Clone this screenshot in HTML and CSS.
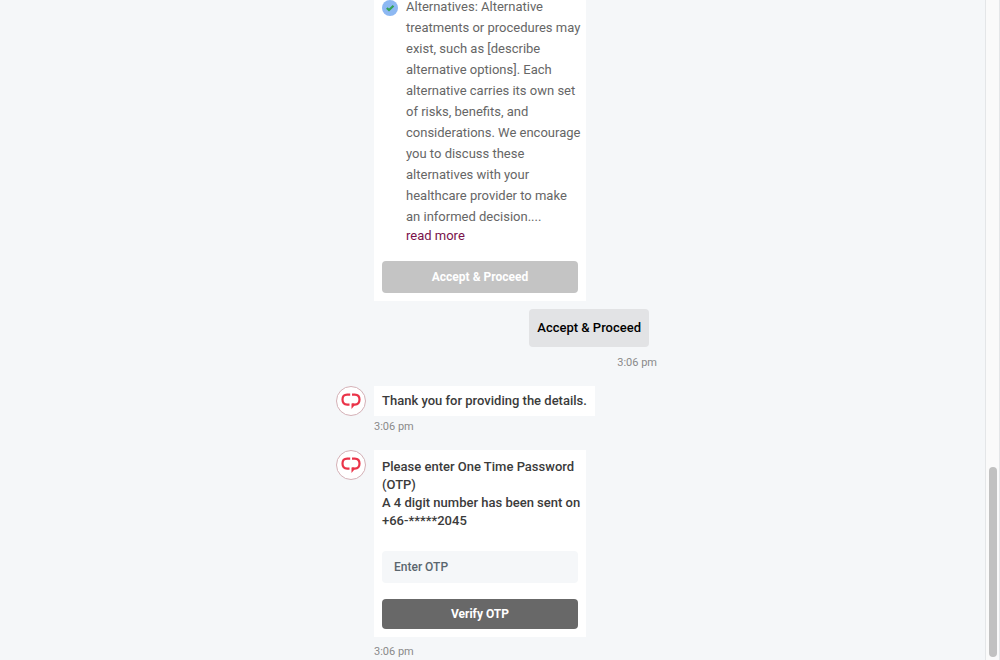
FILE: index.html
```
<!DOCTYPE html>
<html lang="en">
<head>
<meta charset="utf-8">
<meta name="viewport" content="width=device-width, initial-scale=1">
<title>Chat</title>
<link rel="stylesheet" href="styles.css">
</head>
<body>
<svg class="defs" width="0" height="0" aria-hidden="true">
  <symbol id="logo" viewBox="0 0 30 30">
    <circle cx="15" cy="15" r="14.5" fill="#fff" stroke="#d4b0b6"/>
    <path d="M14.200 8.600H11.200Q6.500 8.600 6.500 13.600T11.200 18.700H13.500M16 8.600H18.800Q23.500 8.600 23.500 13.600T18.800 18.700H16" fill="none" stroke="#ea3348" stroke-width="2.200"/>
    <path d="M15.500 17.600H18.200V19.800L15.500 23Z" fill="#ea3348"/>
  </symbol>
</svg>
<div class="page">
  <main class="chat">
    <div class="thread">
      <section class="card consent">
        <ul class="terms">
          <li class="term">
            <svg class="tick" viewBox="0 0 16 16" aria-hidden="true"><circle cx="8" cy="8" r="8" fill="#8db8f2"/><path d="M4.800 8l2.200 2 4.500-4.200" fill="none" stroke="#35a356" stroke-width="2.200"/></svg>
            <div>
              <p class="term-text">Alternatives: Alternative treatments or procedures may exist, such as [describe alternative options]. Each alternative carries its own set of risks, benefits, and considerations. We encourage you to discuss these alternatives with your healthcare provider to make an informed decision....</p>
              <a class="more" href="#">read more</a>
            </div>
          </li>
        </ul>
        <button class="button accept" disabled>Accept &amp; Proceed</button>
      </section>
      <div class="reply">
        <p class="bubble">Accept &amp; Proceed</p>
        <time class="time">3:06 pm</time>
      </div>
      <div class="message">
        <svg class="avatar" aria-hidden="true"><use href="#logo"/></svg>
        <div>
          <p class="card note">Thank you for providing the details.</p>
          <time class="time">3:06 pm</time>
        </div>
      </div>
      <div class="message">
        <svg class="avatar" aria-hidden="true"><use href="#logo"/></svg>
        <div>
          <form class="card otp">
            <label class="prompt" for="otp">Please enter One Time Password (OTP)<br>A 4 digit number has been sent on <br>+66-*****2045</label>
            <input class="field" id="otp" type="text" placeholder="Enter OTP">
            <button class="button verify" type="button">Verify OTP</button>
          </form>
          <time class="time">3:06 pm</time>
        </div>
      </div>
    </div>
  </main>
  <div class="track"><div class="thumb"></div></div>
</div>
</body>
</html>
```
FILE: styles.css
```
* { box-sizing: border-box; }
body {
  margin: 0;
  background: #f5f7f9;
  color: #3b3b3b;
  font: 500 12px/18px Roboto, "Liberation Sans", sans-serif;
}
p, ul { margin: 0; padding: 0; list-style: none; }
.defs { position: absolute; }
.page { display: flex; height: 100vh; overflow: hidden; }
.chat { flex: 1; display: flex; flex-direction: column; justify-content: flex-end; align-items: center; }
.thread { width: 100%; max-width: 329px; padding: 0 0 0 8px; }
.card { background: #fff; padding: 8px; }
.consent { width: 212px; margin-left: 38px; }
.terms { margin-right: -6px; }
.term { display: flex; gap: 8px; }
.tick { flex: none; width: 16px; height: 16px; margin-top: 4px; }
.term-text { font-size: 13px; font-weight: 400; line-height: 21px; color: #666; }
.more { display: block; font-size: 13px; font-weight: 400; line-height: 18px; color: #79124b; text-decoration: none; }
.button {
  display: block;
  width: 100%;
  border: 0;
  border-radius: 4px;
  color: #fff;
  font: 700 12px/18px Roboto, "Liberation Sans", sans-serif;
}
.accept { height: 32px; margin-top: 16px; background: #c4c4c4; }
.verify { height: 30px; background: #686868; }
.reply { display: flex; flex-direction: column; align-items: flex-end; gap: 8px; margin: 8px 0 15px; }
.bubble { margin-right: 8px; padding: 10px 8px; border-radius: 4px; background: #e2e3e5; color: #000; font-size: 13px; font-weight: 500; }
.time { display: block; font-size: 11px; font-weight: 400; line-height: 16px; color: #8a8a8a; }
.message { display: flex; gap: 8px; }
.message + .message { margin-top: 15px; }
.message .time { margin-top: 3px; }
.message:last-child .time { margin-top: 7px; }
.avatar { flex: none; width: 30px; height: 30px; }
.note { padding: 6px 8px; font-size: 13px; font-weight: 500; }
.otp { width: 212px; }
.prompt { display: block; margin-right: -6px; font-size: 13px; font-weight: 500; }
.field {
  display: block;
  width: 100%;
  height: 32px;
  margin: 21px 0 16px;
  padding: 0 12px;
  border: 0;
  border-radius: 4px;
  background: #f5f7f9;
  font: 500 12px/18px Roboto, "Liberation Sans", sans-serif;
}
.field::placeholder { color: #5a666e; opacity: 1; }
.track {
  display: flex;
  flex-direction: column;
  justify-content: flex-end;
  align-items: center;
  width: 15px;
  padding-bottom: 3px;
  background: #fafafa;
  border: solid #e4e6e8;
  border-width: 0 1px;
}
.thumb { width: 8px; height: 190px; border-radius: 4px; background: #c1c1c1; }
```
